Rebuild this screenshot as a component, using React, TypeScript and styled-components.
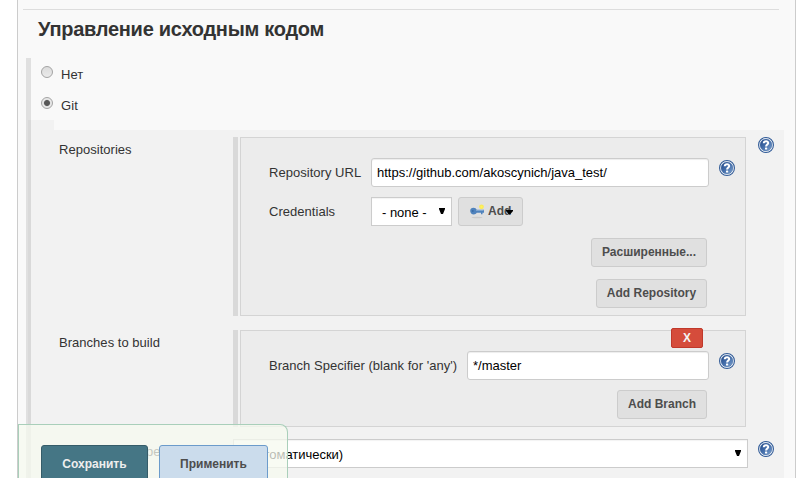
import React from 'react';
import styled, { createGlobalStyle } from 'styled-components';

const GlobalStyle = createGlobalStyle`
  * { box-sizing: border-box; }
  body { margin: 0; background: #fff; overflow: hidden; }
  #root { font: 13px/16px "Liberation Sans", Arial, sans-serif; color: #333; }
  button, input { font-family: inherit; }
`;

const Page = styled.div`
  position: relative;
  width: 809px;
  height: 478px;
  overflow: hidden;
`;

const Panel = styled.main`
  width: 779px;
  height: 478px;
  margin-left: 17px;
  border: solid #ccc;
  border-width: 0 1px;
  background: #f9f9f9;
  overflow: hidden;
`;

const Divider = styled.hr`
  width: 756px;
  height: 1px;
  margin: 9px 0 0 5px;
  border: 0;
  background: #ddd;
`;

const Heading = styled.h2`
  height: 48px;
  margin: 0;
  padding: 7px 0 0 20px;
  font-size: 20px;
  line-height: 24px;
  letter-spacing: -0.27px;
  white-space: nowrap;
`;

const ScmList = styled.section`
  margin-left: 8px;
  height: 440px;
  border-left: 5px solid #e0e0e0;
`;

const RadioRow = styled.label`
  display: flex;
  height: 31px;
  padding: 8px 0 0 10px;
  span { margin: 1px 0 0 8px; }
`;

const RadioText = styled.span<{ $spacing?: number }>`
  letter-spacing: ${p => p.$spacing ?? 0}px;
`;

const Radio = styled.i<{ $on?: boolean }>`
  width: 12px;
  height: 12px;
  border: 1px solid #a3a3a3;
  border-radius: 50%;
  background: ${p => p.$on
    ? 'radial-gradient(circle, #585858 0 2.5px, #e8e8e8 3.6px)'
    : 'linear-gradient(#dcdcdc, #eaeaea)'};
`;

const Indent = styled.div`
  width: 26px;
  height: 10px;
  margin-left: -3px;
  background: rgba(0, 0, 0, 0.026);
`;

const Details = styled.div`
  width: 756px;
  height: 360px;
  margin-left: -3px;
  padding-top: 7px;
  background: rgba(0, 0, 0, 0.026);
`;

const Setting = styled.div<{ $height: number; $gap: number }>`
  display: flex;
  height: ${p => p.$height}px;
  margin-bottom: ${p => p.$gap}px;
`;

const SettingLabel = styled.div`
  width: 205px;
  padding: 5px 0 0 31px;
  letter-spacing: 0.03px;
  white-space: nowrap;
`;

const Group = styled.div`
  width: 506px;
  margin-left: 2px;
  border: 1px solid #d4d4d4;
  background: #ececec;
`;

const DragBar = styled.div`
  width: 5px;
  background: #d9d9d9;
`;

const HelpSlot = styled.div<{ $left: number; $top: number }>`
  display: flex;
  flex: none;
  height: 16px;
  margin: ${p => p.$top}px 0 0 ${p => p.$left}px;
`;

const Field = styled.div<{ $top: number }>`
  display: flex;
  height: 29px;
  margin: ${p => p.$top}px 0 0 28px;
`;

const FieldLabel = styled.span<{ $width: number }>`
  flex: none;
  width: ${p => p.$width}px;
  padding-top: 7px;
  letter-spacing: 0.03px;
  white-space: nowrap;
`;

const TextInput = styled.input<{ $width: number }>`
  width: ${p => p.$width}px;
  height: 29px;
  padding: 0 5px 1px;
  border: 1px solid #ccc;
  border-radius: 3px;
  box-shadow: inset 0 1px 1px rgba(0, 0, 0, 0.075);
  font-size: 13px;
  color: #000;
  outline: 0;
`;

const SelectBox = styled.div<{ $width: number; $pad: number }>`
  display: flex;
  justify-content: space-between;
  flex: none;
  width: ${p => p.$width}px;
  height: 29px;
  padding: 7px 6px 0 ${p => p.$pad}px;
  border: 1px solid #ccc;
  background: #fff;
  box-shadow: inset 0 1px 1px rgba(0, 0, 0, 0.05);
  color: #000;
  letter-spacing: -0.03px;
  white-space: nowrap;
`;

const Caret = styled.svg`
  flex: none;
  width: 6px;
  height: 6px;
  margin-top: 3px;
`;

const Button = styled.button<{ $width: number }>`
  width: ${p => p.$width}px;
  height: 29px;
  padding: 0 0 2px;
  border: 1px solid #ccc;
  border-radius: 3px;
  background: #e0e0e0;
  color: #4d4d4d;
  font-size: 12px;
  font-weight: bold;
  white-space: nowrap;
`;

const AddButton = styled(Button)`
  display: flex;
  align-items: center;
  margin-left: 6px;
  padding-left: 10px;
  svg { flex: none; }
  span { margin-left: 3px; }
`;

const MenuCaret = styled.svg`
  width: 7px;
  height: 5px;
  margin: 2px 0 0 -5px;
`;

const Actions = styled.div<{ $top: number }>`
  display: flex;
  justify-content: flex-end;
  margin: ${p => p.$top}px 38px 0 0;
`;

const DeleteRow = styled.div`
  display: flex;
  justify-content: flex-end;
  height: 20px;
  margin: -3px 42px 0 0;
`;

const DeleteButton = styled.button`
  width: 32px;
  height: 20px;
  padding: 0;
  border: 1px solid #c0392b;
  border-radius: 2px;
  background: #d54c3b;
  color: #f4f4f4;
  font-size: 12px;
  font-weight: bold;
  line-height: 18px;
`;

const StickyBar = styled.footer`
  position: absolute;
  left: 18px;
  bottom: 0;
  display: flex;
  gap: 11px;
  width: 270px;
  height: 54px;
  padding: 20px 0 0 22px;
  border: solid #a9cfba;
  border-width: 1px 1px 0 1px;
  border-radius: 0 8px 0 0;
  background: rgba(245, 249, 239, 0.75);
`;

const SubmitButton = styled.button<{ $primary?: boolean }>`
  width: ${p => (p.$primary ? 107 : 109)}px;
  height: 40px;
  padding: 0 0 3px;
  border: 1px solid ${p => (p.$primary ? '#355c69' : '#6b9bcb')};
  border-radius: 3px;
  background: ${p => (p.$primary ? '#457685' : '#cbdcec')};
  color: ${p => (p.$primary ? '#eee' : '#4d4d4d')};
  font-size: 12px;
  font-weight: bold;
`;

const Help = () => (
  <svg width="16" height="16" viewBox="0 0 16 16" aria-label="Help">
    <defs>
      <linearGradient id="disc" x1="0" y1="0" x2="1" y2="1">
        <stop offset="0" stopColor="#1f4585" />
        <stop offset=".5" stopColor="#456fab" />
        <stop offset="1" stopColor="#7fa3cf" />
      </linearGradient>
    </defs>
    <circle cx="8" cy="8" r="7.45" fill="#fff" stroke="#315b97" strokeWidth="1.1" />
    <circle cx="8" cy="8" r="6" fill="url(#disc)" stroke="#3d659d" strokeWidth=".4" />
    <path d="M5.7 6.3C5.9 3.5 10.4 3.6 10.2 6.1C10.1 7.5 8.1 7.7 8.1 9.6" fill="none" stroke="#fff" strokeWidth="2" />
    <rect x="7" y="10.6" width="2.2" height="2" rx=".5" fill="#fff" />
  </svg>
);

const Arrow = () => <Caret viewBox="0 0 6 6"><path d="M0 0h6v1L4 6H2L0 1z" fill="#000" /></Caret>;

const KeyIcon = () => (
  <svg width="16" height="16" viewBox="0 0 16 16">
    <ellipse cx="8" cy="14.5" rx="5.5" ry=".8" fill="#cbcbcb" />
    <path d="M4.5 4.8C2.5 4.8 1.2 6 1.2 8s1.5 3.4 3.6 3.4c1.3 0 2.3-.6 2.9-1.7H12v1.6h1.5V9.7H15V6.8H7.7C7.1 5.5 6.2 4.8 4.5 4.8z" fill="#4f82bc" />
    <path d="M7 7.5h7.5" stroke="#7da4d0" />
    <circle cx="3.8" cy="8" r=".9" fill="#376aa4" />
    <circle cx="12.5" cy="3.8" r="2.4" fill="#fae95a" />
    <circle cx="12.5" cy="3.8" r="1.1" fill="#fff45a" />
  </svg>
);

export default function App() {
  return (
    <Page>
      <GlobalStyle />
      <Panel>
        <Divider />
        <Heading>Управление исходным кодом</Heading>
        <ScmList>
          <RadioRow><Radio /><RadioText>Нет</RadioText></RadioRow>
          <RadioRow><Radio $on /><RadioText $spacing={0.1}>Git</RadioText></RadioRow>
          <Indent />
          <Details>
            <Setting $height={179} $gap={14}>
              <SettingLabel>Repositories</SettingLabel>
              <DragBar />
              <Group>
                <Field $top={20}>
                  <FieldLabel $width={102}>Repository URL</FieldLabel>
                  <TextInput $width={338} defaultValue="https://github.com/akoscynich/java_test/" />
                  <HelpSlot $left={10} $top={2}><Help /></HelpSlot>
                </Field>
                <Field $top={10}>
                  <FieldLabel $width={102}>Credentials</FieldLabel>
                  <SelectBox $width={81} $pad={10}>- none - <Arrow /></SelectBox>
                  <AddButton $width={65}>
                    <KeyIcon /><span>Add</span>
                    <MenuCaret viewBox="0 0 7 5"><path d="M0 1h7v1L4.5 5h-2L0 2z" fill="#000" /></MenuCaret>
                  </AddButton>
                </Field>
                <Actions $top={12}><Button $width={116}>Расширенные...</Button></Actions>
                <Actions $top={12}><Button $width={111}>Add Repository</Button></Actions>
              </Group>
              <HelpSlot $left={12} $top={0}><Help /></HelpSlot>
            </Setting>
            <Setting $height={97} $gap={12}>
              <SettingLabel>Branches to build</SettingLabel>
              <DragBar />
              <Group>
                <DeleteRow><DeleteButton>X</DeleteButton></DeleteRow>
                <Field $top={3}>
                  <FieldLabel $width={198}>Branch Specifier (blank for 'any')</FieldLabel>
                  <TextInput $width={242} defaultValue="*/master" />
                  <HelpSlot $left={10} $top={2}><Help /></HelpSlot>
                </Field>
                <Actions $top={10}><Button $width={90}>Add Branch</Button></Actions>
              </Group>
            </Setting>
            <Setting $height={29} $gap={0}>
              <SettingLabel>Просмотрщик репозитория</SettingLabel>
              <SelectBox $width={515} $pad={10}>(Автоматически)<Arrow /></SelectBox>
              <HelpSlot $left={10} $top={2}><Help /></HelpSlot>
            </Setting>
          </Details>
        </ScmList>
      </Panel>
      <StickyBar>
        <SubmitButton $primary>Сохранить</SubmitButton>
        <SubmitButton>Применить</SubmitButton>
      </StickyBar>
    </Page>
  );
}
